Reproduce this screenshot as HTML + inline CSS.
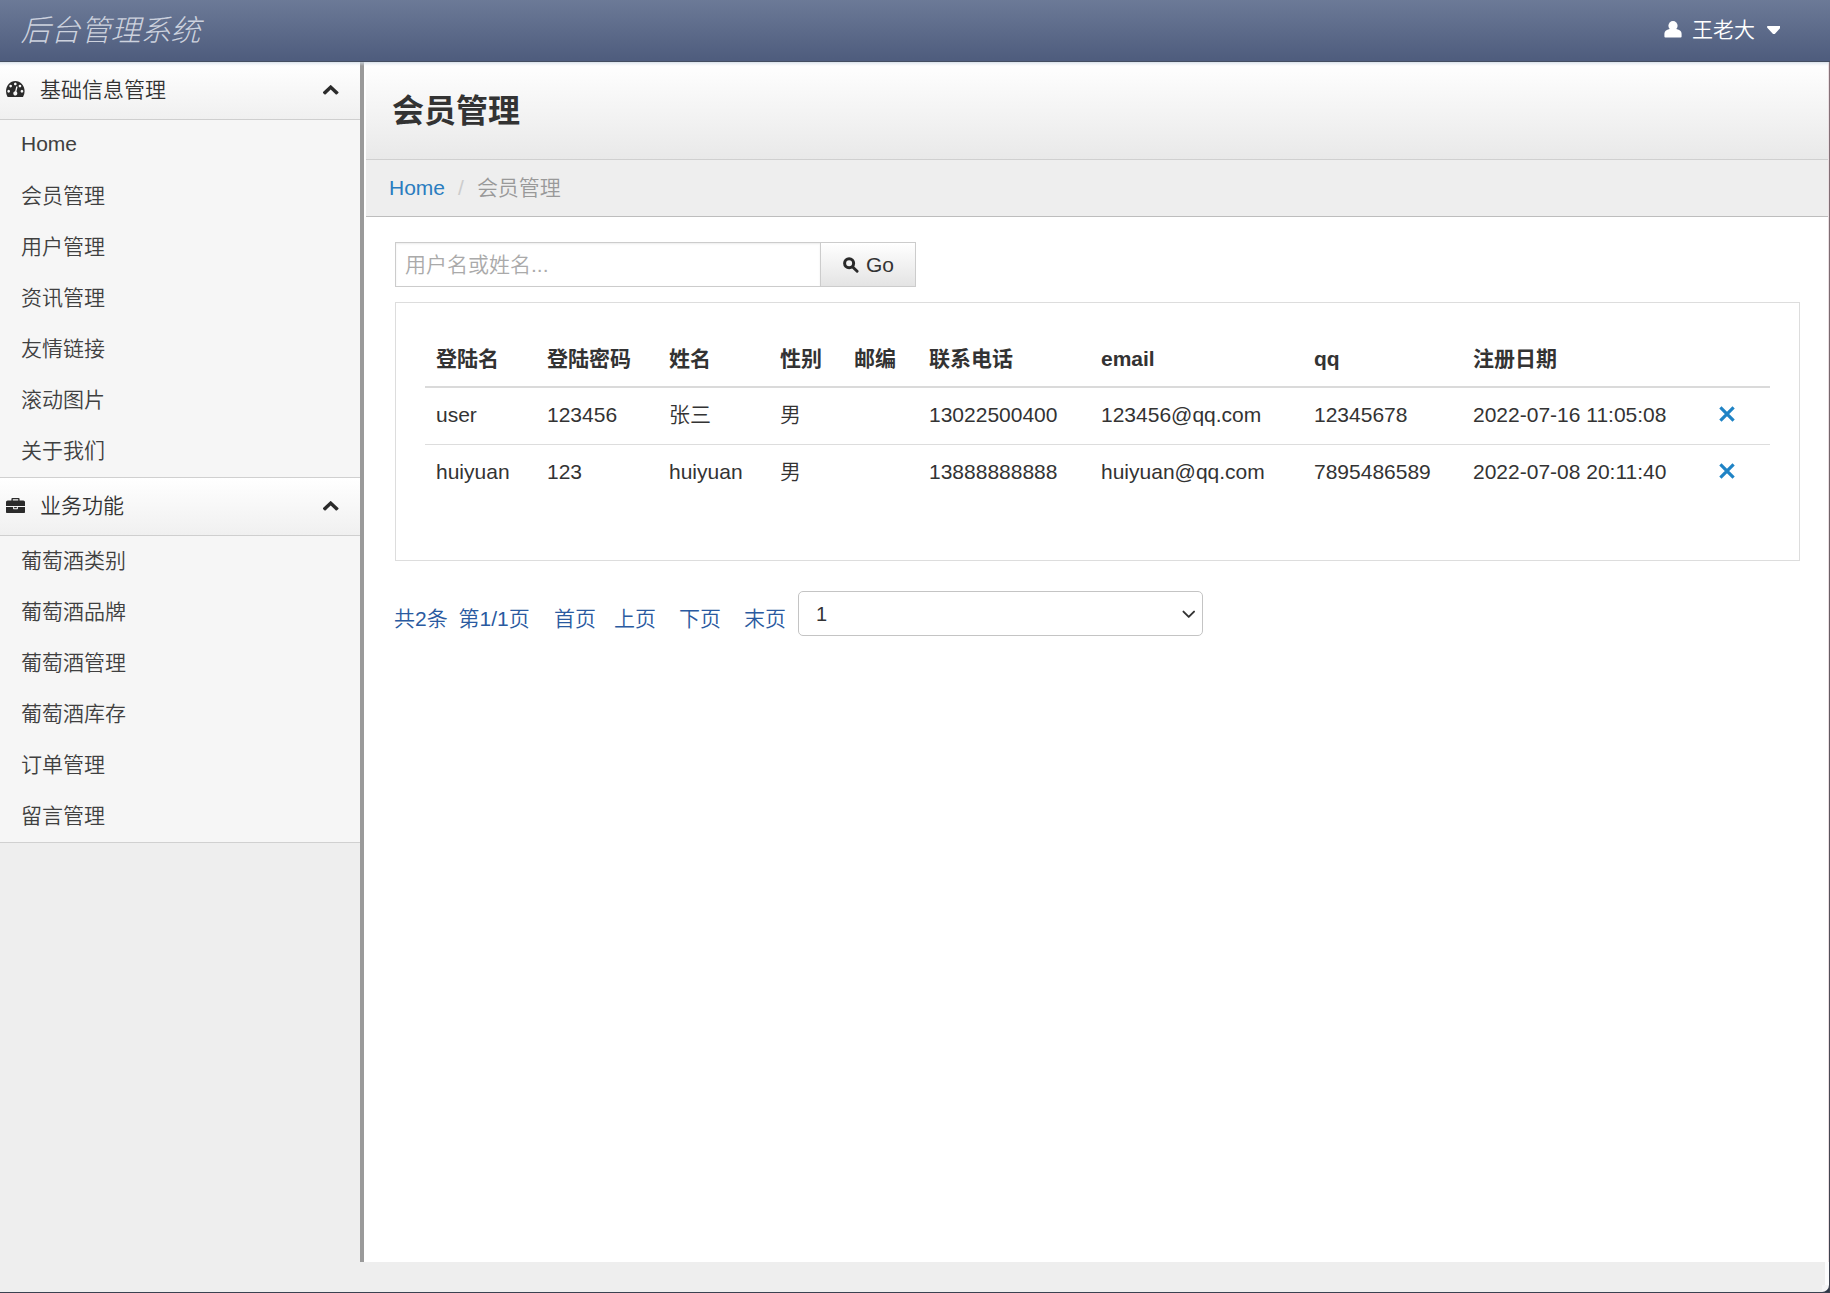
<!DOCTYPE html>
<html lang="zh-CN">
<head>
<meta charset="utf-8">
<title>后台管理系统</title>
<style>
*{box-sizing:border-box;}
html,body{margin:0;padding:0;}
body{width:1830px;height:1293px;overflow:hidden;background:#eeeeee;position:relative;
  font-family:"Liberation Sans","Noto Sans CJK SC",sans-serif;font-size:21px;line-height:30px;color:#333;font-weight:350;}
a{text-decoration:none;color:inherit;}
svg{display:block;}
/* navbar */
#nav{position:absolute;left:0;top:0;width:1830px;height:62px;
  background:linear-gradient(to bottom,#6c7a97 0%,#4f5d7e 96%,#4f5d7e 100%);border-bottom:1px solid #444e61;z-index:5;}
#navsh{position:absolute;left:0;top:62px;width:1829px;height:4px;z-index:5;background:linear-gradient(to bottom,rgba(205,216,228,.75) 0%,rgba(215,224,234,.35) 50%,rgba(255,255,255,0) 100%);}
#brand{position:absolute;left:20.5px;top:11px;font-size:30px;line-height:40px;font-style:italic;font-weight:300;color:#cdd2de;letter-spacing:0;}
#user{position:absolute;left:1692px;top:15px;font-size:21px;line-height:30px;color:#fff;}
#user-ico{position:absolute;left:1663.5px;top:20.5px;width:18px;height:17px;}
#caret{position:absolute;left:1766.6px;top:25.7px;width:13.8px;height:8.6px;}
/* sidebar */
#side{position:absolute;left:0;top:62px;width:360px;height:1200px;background:#eeeeee;}
#sidebar-bar{position:absolute;left:360px;top:62px;width:4px;height:1200px;background:#9a9a9a;}
.sh{position:absolute;left:0;width:360px;height:58px;border-bottom:1px solid #cfcfcf;
  background:linear-gradient(to bottom,#ffffff 0%,#f0f0f0 100%);}
.sh .t{position:absolute;left:40px;top:13px;font-size:21px;line-height:30px;color:#333;font-weight:350;}
.sh .ic{position:absolute;}
.sh .chev{position:absolute;left:323.3px;top:23.2px;width:15.4px;height:9.6px;}
.sb{position:absolute;left:0;width:360px;background:#f6f6f6;border-bottom:1px solid #d0d0d0;}
.sb a{display:block;height:51px;padding:10px 0 0 21px;line-height:30px;color:#404040;}
/* main */
#main{position:absolute;left:364px;top:62px;width:1464px;height:1200px;background:#fff;}
#ph{position:absolute;left:2px;top:0;width:1462px;height:98px;border-bottom:1px solid #d0d0d0;
  background:linear-gradient(to bottom,#ffffff 0%,#e9e9e9 100%);}
#ph h1{position:absolute;left:26px;top:26px;margin:0;font-size:32px;line-height:46px;font-weight:bold;color:#333;}
#bc{position:absolute;left:2px;top:98px;width:1462px;height:57px;background:#eeeeee;border-bottom:1px solid #bdbdbd;}
#bc .in{position:absolute;left:23px;top:13px;line-height:30px;font-size:21px;white-space:nowrap;}
#bc a{color:#2a7dc0;}
#bc .sep{color:#ccc;padding:0 13px 0 13px;}
#bc .cur{color:#999;}
#q{position:absolute;left:31px;top:180px;width:426px;height:45px;border:1px solid #ccc;background:#fff;
  box-shadow:inset 0 1px 2px rgba(0,0,0,.075);padding:0 0 0 9px;line-height:43px;color:#aaa;font-size:21px;}
#go{position:absolute;left:456px;top:180px;width:96px;height:45px;border:1px solid #ccc;
  background:linear-gradient(to bottom,#ffffff 0%,#e4e4e4 100%);color:#333;font-size:21px;line-height:43px;}
#go svg{position:absolute;left:22px;top:13.5px;width:16px;height:16px;}
#go span{position:absolute;left:45px;top:0;}
#panel{position:absolute;left:31px;top:240px;width:1405px;height:259px;border:1px solid #ddd;background:#fff;}
table{position:absolute;left:29px;top:26px;width:1345px;border-collapse:separate;border-spacing:0;table-layout:fixed;}
th,td{text-align:left;padding:0 0 0 11px;font-size:21px;white-space:nowrap;vertical-align:middle;}
th{height:59px;font-weight:bold;border-bottom:2px solid #dadada;color:#333;padding-top:2px;}
td{height:57px;border-top:1px solid #ddd;color:#333;padding-bottom:3px;}
tr.first td{border-top:none;height:56px;}
td svg{width:16px;height:16px;margin-left:1px;position:relative;top:-0.5px;}
#pg{position:absolute;left:30px;top:542px;line-height:30px;font-size:21px;color:#2a5aa0;white-space:nowrap;}
#pg span{position:absolute;top:0;}
#sel{position:absolute;left:434px;top:529px;width:405px;height:45px;border:1px solid #c4c4c4;border-radius:5px;background:#fff;}
#sel span{position:absolute;left:17px;top:7px;font-size:20px;line-height:30px;color:#333;}
#sel svg{position:absolute;left:383px;top:18px;width:13.5px;height:9px;}
/* window edges */
#corner{position:absolute;left:1822px;top:1285px;width:7px;height:7px;background:#2e3646;z-index:3;}
#corner i{position:absolute;left:0;top:0;width:7px;height:7px;background:#f4f4f5;border-bottom-right-radius:7px;}
#re{position:absolute;left:1825px;top:1262px;width:4px;height:30px;background:#fcfcfd;}
#re3{position:absolute;left:1828px;top:0;width:1px;height:1262px;background:rgba(235,215,220,.6);}
#re2{position:absolute;left:1829px;top:0;width:1px;height:1293px;background:linear-gradient(to bottom,#8a757c 0%,#6f6369 40%,#3a3f4c 100%);}
#be{position:absolute;left:0;top:1292px;width:1830px;height:1px;background:#3a4150;}
</style>
</head>
<body>
<div id="nav">
  <div id="brand">后台管理系统</div>
  <svg id="user-ico" viewBox="0 0 18 17"><circle cx="9" cy="4.7" r="4.6" fill="#fff"/><path fill="#fff" d="M0.400 15.500V12.800C0.400 10.300 2.200 8.900 5.600 8.100H12.400C15.800 8.900 17.600 10.300 17.600 12.800V15.500Q17.600 16.500 16.600 16.500H1.400Q0.400 16.500 0.400 15.500Z"/></svg>
  <div id="user">王老大</div>
  <svg id="caret" preserveAspectRatio="none" viewBox="384 640 1024 576"><path fill="#fff" d="M1408 704q0 26-19 45l-448 448q-19 19-45 19t-45-19l-448-448q-19-19-19-45t19-45 45-19h896q26 0 45 19t19 45z"/></svg>
</div>

<div id="navsh"></div>
<div id="side">
  <div class="sh" style="top:0">
    <svg class="ic" preserveAspectRatio="none" style="left:6px;top:19px;width:18.6px;height:16px" viewBox="0 256 1792 1408"><path fill="#2b2b2b" d="M384 1152q0-53-37.500-90.500t-90.500-37.500-90.500 37.500-37.500 90.500 37.500 90.500 90.500 37.500 90.500-37.500 37.500-90.500zm192-448q0-53-37.500-90.500t-90.500-37.500-90.500 37.500-37.500 90.500 37.500 90.500 90.500 37.500 90.500-37.500 37.500-90.500zm428 481l101-382q6-26-7.500-48.500t-38.500-29.500-48 6.500-30 39.500l-101 382q-60 5-107 43.500t-63 98.500q-20 77 20 146t117 89 146-20 89-117q16-60-6-117t-72-91zm660-33q0-53-37.500-90.500t-90.500-37.500-90.500 37.500-37.500 90.500 37.500 90.500 90.500 37.500 90.500-37.500 37.500-90.500zm-640-640q0-53-37.500-90.500t-90.500-37.500-90.500 37.500-37.500 90.500 37.500 90.500 90.500 37.500 90.500-37.500 37.500-90.500zm448 192q0-53-37.500-90.500t-90.500-37.500-90.500 37.500-37.500 90.500 37.500 90.500 90.500 37.500 90.500-37.500 37.500-90.500zm320 448q0 261-141 483-19 29-54 29h-1402q-35 0-54-29-141-221-141-483 0-182 71-348t191-286 286-191 348-71 348 71 286 191 191 286 71 348z"/></svg>
    <div class="t">基础信息管理</div>
    <svg class="chev" preserveAspectRatio="none" viewBox="109 485 1574 1030"><path fill="#2b2b2b" d="M1683 1331l-166 165q-19 19-45 19t-45-19l-531-531-531 531q-19 19-45 19t-45-19l-166-165q-19-19-19-45.500t19-45.500l742-741q19-19 45-19t45 19l742 741q19 19 19 45.500t-19 45.500z"/></svg>
  </div>
  <div class="sb" style="top:58px;height:358px">
    <a><span style="position:relative;top:-1px">Home</span></a><a>会员管理</a><a>用户管理</a><a>资讯管理</a><a>友情链接</a><a>滚动图片</a><a>关于我们</a>
  </div>
  <div class="sh" style="top:416px">
    <svg class="ic" preserveAspectRatio="none" style="left:5.5px;top:19.5px;width:19px;height:15.5px" viewBox="0 0 1792 1536"><path fill="#2b2b2b" d="M640 256h512v-128h-512v128zm1152 640v480q0 66-47 113t-113 47h-1472q-66 0-113-47t-47-113v-480h672v160q0 26 19 45t45 19h320q26 0 45-19t19-45v-160h672zm-768 0v128h-256v-128h256zm768-480v384h-1792v-384q0-66 47-113t113-47h352v-160q0-40 28-68t68-28h576q40 0 68 28t28 68v160h352q66 0 113 47t47 113z"/></svg>
    <div class="t">业务功能</div>
    <svg class="chev" preserveAspectRatio="none" viewBox="109 485 1574 1030"><path fill="#2b2b2b" d="M1683 1331l-166 165q-19 19-45 19t-45-19l-531-531-531 531q-19 19-45 19t-45-19l-166-165q-19-19-19-45.500t19-45.500l742-741q19-19 45-19t45 19l742 741q19 19 19 45.500t-19 45.500z"/></svg>
  </div>
  <div class="sb" style="top:474px;height:307px">
    <a>葡萄酒类别</a><a>葡萄酒品牌</a><a>葡萄酒管理</a><a>葡萄酒库存</a><a>订单管理</a><a>留言管理</a>
  </div>
</div>
<div id="sidebar-bar"></div>

<div id="main">
  <div id="ph"><h1>会员管理</h1></div>
  <div id="bc"><div class="in"><a>Home</a><span class="sep">/</span><span class="cur">会员管理</span></div></div>
  <div id="q">用户名或姓名...</div>
  <div id="go"><svg viewBox="0 0 17 17"><circle cx="6.500" cy="6.700" r="4.800" fill="none" stroke="#2a2a2a" stroke-width="3.200"/><path d="M10.300 10.500L15 15.200" stroke="#2a2a2a" stroke-width="3" stroke-linecap="round" fill="none"/></svg><span>Go</span></div>
  <div id="panel">
    <table>
      <colgroup><col style="width:111px"><col style="width:122px"><col style="width:111px"><col style="width:74px"><col style="width:75px"><col style="width:172px"><col style="width:213px"><col style="width:159px"><col style="width:245px"><col style="width:63px"></colgroup>
      <tr><th>登陆名</th><th>登陆密码</th><th>姓名</th><th>性别</th><th>邮编</th><th>联系电话</th><th>email</th><th>qq</th><th>注册日期</th><th></th></tr>
      <tr class="first"><td>user</td><td>123456</td><td>张三</td><td>男</td><td></td><td>13022500400</td><td>123456@qq.com</td><td>12345678</td><td>2022-07-16 11:05:08</td><td><svg viewBox="0 0 16 16"><path d="M1.4 1.4L14.6 14.6M14.6 1.4L1.4 14.6" fill="none" stroke="#1f83c5" stroke-width="3.2"/></svg></td></tr>
      <tr><td>huiyuan</td><td>123</td><td>huiyuan</td><td>男</td><td></td><td>13888888888</td><td>huiyuan@qq.com</td><td>7895486589</td><td>2022-07-08 20:11:40</td><td><svg viewBox="0 0 16 16"><path d="M1.4 1.4L14.6 14.6M14.6 1.4L1.4 14.6" fill="none" stroke="#1f83c5" stroke-width="3.2"/></svg></td></tr>
    </table>
  </div>
  <div id="pg"><span style="left:0">共2条</span><span style="left:64.5px">第1/1页</span><span style="left:160px">首页</span><span style="left:220px">上页</span><span style="left:285px">下页</span><span style="left:350px">末页</span></div>
  <div id="sel"><span>1</span><svg viewBox="0 0 14 9"><path d="M1.5 1.5 L7 7 L12.500 1.500" fill="none" stroke="#333" stroke-width="2" stroke-linecap="round" stroke-linejoin="round"/></svg></div>
</div>
<div id="corner"><i></i></div><div id="re"></div><div id="re3"></div><div id="re2"></div><div id="be"></div>
</body>
</html>
